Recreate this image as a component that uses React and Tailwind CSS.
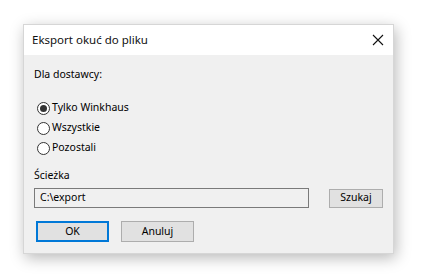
import React, { useState } from "react";

const options = ["Tylko Winkhaus", "Wszystkie", "Pozostali"];

const Radio = ({ label, checked, onSelect }) => (
  <div className="flex items-center h-[20px] cursor-default" onClick={onSelect}>
    <span className="w-[13px] h-[13px] rounded-full border border-[#333] bg-white flex items-center justify-center">
      {checked && <span className="w-[7px] h-[7px] rounded-full bg-[#333]" />}
    </span>
    <span className="ml-[2px]">{label}</span>
  </div>
);

export default function App() {
  const [choice, setChoice] = useState(0);

  return (
    <div className="w-[426px] h-[278px] bg-white pl-[23px] pt-[24px] font-['Noto_Sans',sans-serif] text-[10.5px] text-black">
      <div className="w-[371px] h-[230px] flex flex-col bg-[#f0f0f0] border border-[#d6d6d6] shadow-[2px_4px_14px_rgba(0,0,0,0.28)]">
        {/* Title bar */}
        <div className="h-[30px] bg-white flex items-center justify-between pl-[8px] pr-[9px]">
          <span className="text-[11.5px] text-[#111]">Eksport okuć do pliku</span>
          <svg width="12" height="12" viewBox="0 0 12 12" stroke="#111" strokeWidth="1.1">
            <path d="M1 1l10 10M11 1L1 11" />
          </svg>
        </div>

        {/* Body */}
        <div className="flex flex-col pl-[10px] pr-[10px]">
          <div className="mt-[11px] leading-[16px]">Dla dostawcy:</div>

          <div className="mt-[16px] flex flex-col pl-[3px]">
            {options.map((o, i) => (
              <Radio key={o} label={o} checked={choice === i} onSelect={() => setChoice(i)} />
            ))}
          </div>

          <div className="mt-[9px] leading-[16px]">Ścieżka</div>

          <div className="mt-[5px] flex items-center">
            <div className="w-[275px] h-[20px] bg-[#f0f0f0] border border-[#7a7a7a] flex items-center pl-[5px]">
              C:\export
            </div>
            <button className="ml-[20px] w-[54px] h-[19px] bg-[#e1e1e1] border border-[#adadad] flex items-center justify-center">
              Szukaj
            </button>
          </div>

          <div className="mt-[13px] flex items-center pl-[2px]">
            <button className="w-[73px] h-[21px] bg-[#e1e1e1] border-2 border-[#0078d7] flex items-center justify-center">
              OK
            </button>
            <button className="ml-[12px] w-[73px] h-[21px] bg-[#e1e1e1] border border-[#adadad] flex items-center justify-center">
              Anuluj
            </button>
          </div>
        </div>
      </div>
    </div>
  );
}
